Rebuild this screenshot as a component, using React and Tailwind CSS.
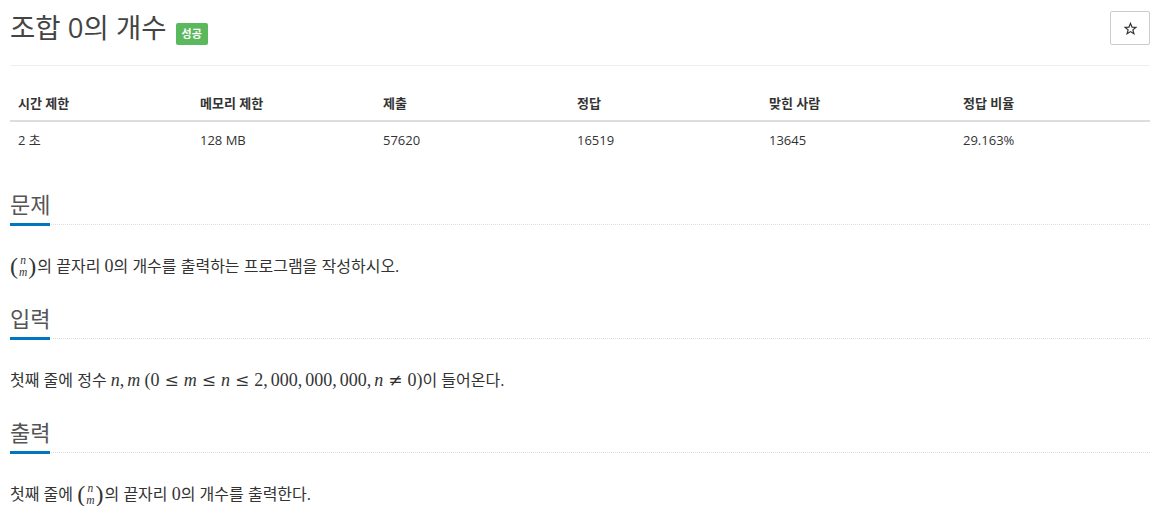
import React from 'react';

const stats = [
  { label: '시간 제한', value: '2 초', w: 'w-[182px]' },
  { label: '메모리 제한', value: '128 MB', w: 'w-[183px]' },
  { label: '제출', value: '57620', w: 'w-[194px]' },
  { label: '정답', value: '16519', w: 'w-[192px]' },
  { label: '맞힌 사람', value: '13645', w: 'w-[194px]' },
  { label: '정답 비율', value: '29.163%', w: 'flex-1' },
];

const MathI = ({ children }) => (
  <span className="font-['Liberation_Serif',serif] italic text-[18px]">{children}</span>
);

const MathN = ({ children }) => (
  <span className="font-['Liberation_Serif',serif] text-[18px]">{children}</span>
);

// relation symbol with TeX-like spacing
const Rel = ({ children }) => (
  <span className="font-['DejaVu_Serif',serif] text-[17px] inline-block mx-[5px]">{children}</span>
);

const Comma = () => <MathN><span className="mr-[3px]">,</span></MathN>;

const Binom = () => (
  <span className="inline-flex items-center align-middle font-['Liberation_Serif',serif] -mt-[4px] mr-[1px]">
    <span className="text-[24px] leading-[22px]">(</span>
    <span className="inline-flex flex-col items-center italic text-[11.5px] leading-[12px] px-[1px]">
      <span>n</span>
      <span>m</span>
    </span>
    <span className="text-[24px] leading-[22px]">)</span>
  </span>
);

const StarIcon = () => (
  <svg width="13" height="13" viewBox="0 0 24 24" fill="none" stroke="#333" strokeWidth="2.2" strokeLinejoin="miter">
    <path d="M12 2.5l2.8 6.9 7.2.4-5.6 4.7 1.9 7.2L12 17.7l-6.3 4 1.9-7.2L2 9.8l7.2-.4z" />
  </svg>
);

const Headline = ({ title }) => (
  <h2 className="flex border-b border-dotted border-[#ddd]">
    <span className="text-[22px] leading-[33px] text-[#555] pb-[2px] border-b-[3px] border-[#0076c0] -mb-[2px]">
      {title}
    </span>
  </h2>
);

const Section = ({ title, children, first }) => (
  <section className={first ? 'mt-[30px]' : 'mt-[24px]'}>
    <Headline title={title} />
    <p className="mt-[29px] text-[16px] leading-[24px] text-[#333]">{children}</p>
  </section>
);

export default function App() {
  return (
    <div className="w-[1157px] bg-white pl-[10px] pr-[7px] font-['Open_Sans','Noto_Sans_CJK_KR',sans-serif] text-[#333]">
      {/* title */}
      <div className="flex items-end justify-between pt-[11px] pb-[20px] border-b border-[#eee]">
        <div className="flex items-end gap-[9px]">
          <h1 className="text-[27.5px] leading-[34px] text-[#444] font-normal">조합 0의 개수</h1>
          <span className="h-[22px] px-[6px] flex items-center bg-[#5cb85c] text-white text-[11px] font-bold rounded-[2px]">
            성공
          </span>
        </div>
        <button className="w-[40px] h-[34px] border border-[#ccc] rounded-[2px] flex items-center justify-center">
          <StarIcon />
        </button>
      </div>

      {/* stats table */}
      <div className="mt-[20px] text-[13px]">
        <div className="flex border-b-2 border-[#ddd]">
          {stats.map((s) => (
            <div key={s.label} className={`${s.w} px-[8px] py-[7px] leading-[20px] font-bold`}>
              {s.label}
            </div>
          ))}
        </div>
        <div className="flex">
          {stats.map((s) => (
            <div key={s.label} className={`${s.w} px-[8px] py-[8px] leading-[20px]`}>
              {s.value}
            </div>
          ))}
        </div>
      </div>

      <Section title="문제" first>
        <Binom />의 끝자리 <MathN>0</MathN>의 개수를 출력하는 프로그램을 작성하시오.
      </Section>

      <Section title="입력">
        첫째 줄에 정수 <MathI>n</MathI><Comma /><MathI>m</MathI>{' '}
        <MathN>(0</MathN>
        <Rel>≤</Rel>
        <MathI>m</MathI>
        <Rel>≤</Rel>
        <MathI>n</MathI>
        <Rel>≤</Rel>
        <MathN>2</MathN><Comma /><MathN>000</MathN><Comma /><MathN>000</MathN><Comma /><MathN>000</MathN><Comma />
        <MathI>n</MathI>
        <Rel>≠</Rel>
        <MathN>0)</MathN>이 들어온다.
      </Section>

      <Section title="출력">
        첫째 줄에 <Binom />의 끝자리 <MathN>0</MathN>의 개수를 출력한다.
      </Section>
    </div>
  );
}
